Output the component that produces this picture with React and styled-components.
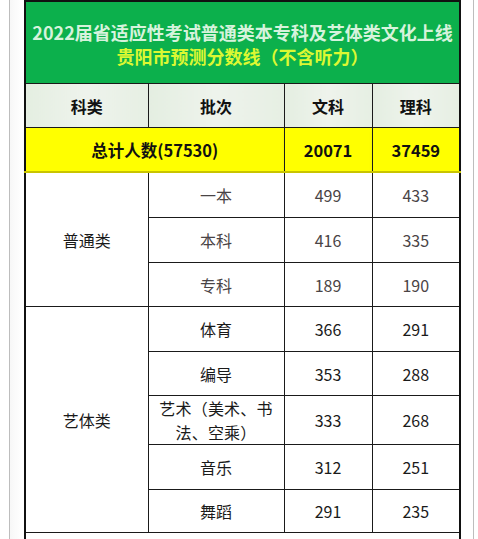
import React from "react";
import styled, { createGlobalStyle } from "styled-components";

const Global = createGlobalStyle`
  html, body { margin: 0; padding: 0; background: #ffffff; }
  body { font-family: "Noto Sans CJK SC", "Noto Sans", sans-serif; }
`;

const Frame = styled.div`
  margin-left: 9px;
  width: 465px;
  height: 539px;
  border-left: 1.5px solid #bdbdbd;
  border-right: 1.5px solid #bdbdbd;
  padding-left: 14px;
  box-sizing: border-box;
  overflow: hidden;
  background: linear-gradient(90deg, #f7f7f7 0px, #ffffff 12px);
`;

const Table = styled.table`
  border-collapse: collapse;
  width: 435px;
  table-layout: fixed;
  border: 2px solid #111;
`;

const TitleCell = styled.td`
  height: 78px;
  background: #0cb04c;
  border: 1.5px solid #1a1a1a;
  text-align: center;
  padding: 0;
  padding-top: 3px;
  vertical-align: middle;
`;

const TitleLine = styled.div`
  font-size: 18px;
  font-weight: 700;
  line-height: 24px;
  color: ${(p) => (p.$sub ? "#dcf832" : "#d6f3dc")};
  white-space: nowrap;
`;

const HeadCell = styled.th`
  height: 43px;
  background: linear-gradient(90deg, #e4eee1, #eef3ec 50%, #e6efe3);
  border: 1.5px solid #1a1a1a;
  font-size: 16px;
  font-weight: 700;
  color: #111;
  text-align: center;
  padding: 0;
`;

const TotalCell = styled.td`
  height: 43px;
  background: #ffff00;
  border: 1.5px solid #1a1a1a;
  border-bottom: 2px solid #c9c400;
  font-size: 16.5px;
  font-weight: 700;
  color: #111;
  text-align: center;
  padding: 0;
  box-shadow: 0 2px 3px rgba(0, 0, 0, 0.08);
`;

const Cell = styled.td`
  height: ${(p) => p.$h || 44}px;
  border: 1.5px solid #1a1a1a;
  font-size: 16px;
  font-weight: 400;
  color: ${(p) => (p.$muted ? "#4a4446" : "#1a1a1a")};
  text-align: center;
  padding: 0;
  line-height: 22px;
  background: #fff;
`;

const TwoLine = styled.div`
  line-height: 24px;
  letter-spacing: 0.2px;
`;

const groups = [
  {
    name: "普通类",
    muted: true,
    rows: [
      ["一本", "499", "433"],
      ["本科", "416", "335"],
      ["专科", "189", "190", 43],
    ],
  },
  {
    name: "艺体类",
    muted: false,
    rows: [
      ["体育", "366", "291"],
      ["编导", "353", "288", 43],
      ["艺术（美术、书法、空乘）", "333", "268", 48, true],
      ["音乐", "312", "251"],
      ["舞蹈", "291", "235", 42],
    ],
  },
];

export default function App() {
  return (
    <>
      <Global />
      <Frame>
        <Table>
          <colgroup>
            <col style={{ width: 123 }} />
            <col style={{ width: 136 }} />
            <col style={{ width: 88 }} />
            <col style={{ width: 88 }} />
          </colgroup>
          <tbody>
            <tr>
              <TitleCell colSpan={4}>
                <TitleLine>2022届省适应性考试普通类本专科及艺体类文化上线</TitleLine>
                <TitleLine $sub>贵阳市预测分数线（不含听力）</TitleLine>
              </TitleCell>
            </tr>
            <tr>
              <HeadCell>科类</HeadCell>
              <HeadCell>批次</HeadCell>
              <HeadCell>文科</HeadCell>
              <HeadCell>理科</HeadCell>
            </tr>
            <tr>
              <TotalCell colSpan={2}>总计人数(57530)</TotalCell>
              <TotalCell>20071</TotalCell>
              <TotalCell>37459</TotalCell>
            </tr>
            {groups.map((g) =>
              g.rows.map((r, i) => (
                <tr key={g.name + r[0]}>
                  {i === 0 && <Cell rowSpan={g.rows.length}>{g.name}</Cell>}
                  <Cell $h={r[3]} $muted={g.muted}>
                    {r[4] ? (
                      <TwoLine>
                        艺术（美术、书
                        <br />
                        法、空乘）
                      </TwoLine>
                    ) : (
                      r[0]
                    )}
                  </Cell>
                  <Cell $h={r[3]} $muted={g.muted}>{r[1]}</Cell>
                  <Cell $h={r[3]} $muted={g.muted}>{r[2]}</Cell>
                </tr>
              ))
            )}
            <tr>
              <Cell colSpan={4} $h={44}></Cell>
            </tr>
          </tbody>
        </Table>
      </Frame>
    </>
  );
}
